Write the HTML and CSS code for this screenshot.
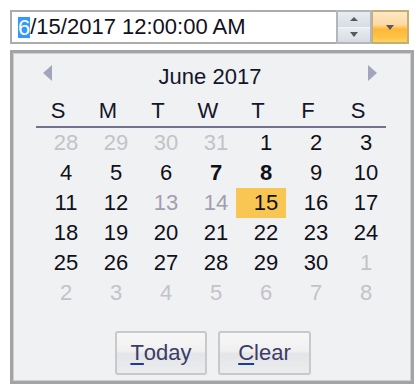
FILE: index.html
```html
<!DOCTYPE html>
<html>
<head>
<meta charset="utf-8">
<link rel="stylesheet" href="styles.css">
</head>
<body>
<div class="wrap">
  <div class="editor">
    <div class="field"><span class="sel">6</span>/15/2017 12:00:00 AM</div>
    <div class="spin">
      <div class="spin-btn"><span class="tri-up"></span></div>
      <div class="spin-btn"><span class="tri-down"></span></div>
    </div>
    <div class="drop"><span class="tri-down"></span></div>
  </div>
  <div class="popup">
    <div class="nav">
      <span class="arrow-left"></span>
      <span class="title">June 2017</span>
      <span class="arrow-right"></span>
    </div>
    <div class="dow">
      <span>S</span><span>M</span><span>T</span><span>W</span><span>T</span><span>F</span><span>S</span>
    </div>
    <div class="days">
      <span class="other">28</span><span class="other">29</span><span class="other">30</span><span class="other">31</span><span>1</span><span>2</span><span>3</span>
      <span>4</span><span>5</span><span>6</span><span class="bold">7</span><span class="bold">8</span><span>9</span><span>10</span>
      <span>11</span><span>12</span><span class="dis">13</span><span class="dis">14</span><span class="today">15</span><span>16</span><span>17</span>
      <span>18</span><span>19</span><span>20</span><span>21</span><span>22</span><span>23</span><span>24</span>
      <span>25</span><span>26</span><span>27</span><span>28</span><span>29</span><span>30</span><span class="other">1</span>
      <span class="other">2</span><span class="other">3</span><span class="other">4</span><span class="other">5</span><span class="other">6</span><span class="other">7</span><span class="other">8</span>
    </div>
    <div class="buttons">
      <div class="btn btn-today"><span class="u">T</span>oday</div>
      <div class="btn btn-clear"><span class="u">C</span>lear</div>
    </div>
  </div>
</div>
</body>
</html>
```

FILE: styles.css
```css
html, body {
  margin: 0;
  padding: 0;
  background: #ffffff;
}

body {
  font-family: "Liberation Sans", Arial, sans-serif;
  font-size: 22px;
  color: #111118;
}

.wrap {
  padding: 10px;
}

.editor {
  display: flex;
  width: 399px;
  height: 34px;
}

.field {
  box-sizing: border-box;
  width: 326px;
  height: 34px;
  border: 2px solid #acacac;
  border-right: none;
  padding-left: 6px;
  display: flex;
  align-items: center;
  white-space: pre;
  color: #101020;
  background: #ffffff;
}

.sel {
  display: inline-block;
  background: #3399ff;
  color: #ffffff;
  line-height: 21px;
}

.spin {
  box-sizing: border-box;
  width: 36px;
  height: 34px;
  border: 2px solid #b4b6ba;
  display: flex;
  flex-direction: column;
}

.spin-btn {
  flex: 1;
  display: flex;
  align-items: center;
  justify-content: center;
  background: linear-gradient(#e9ecf1, #d7dce4);
}

.spin-btn + .spin-btn {
  border-top: 1px solid #f4f5f7;
}

.tri-up {
  width: 0;
  height: 0;
  border-left: 4px solid transparent;
  border-right: 4px solid transparent;
  border-bottom: 4px solid #555a60;
}

.tri-down {
  width: 0;
  height: 0;
  border-left: 4px solid transparent;
  border-right: 4px solid transparent;
  border-top: 5px solid #555a60;
}

.drop {
  box-sizing: border-box;
  width: 37px;
  height: 34px;
  border: 2px solid #c4ae74;
  border-left-width: 1px;
  display: flex;
  align-items: center;
  justify-content: center;
  background: linear-gradient(#fde8c4 0%, #fcd9a2 42%, #ffb735 58%, #ffc448 85%, #ffd266 100%);
}

.popup {
  box-sizing: border-box;
  width: 404px;
  margin-top: 6px;
  border: 3px solid #a4a4a4;
  box-shadow: inset 0 0 0 1px #cfcfd2;
  background: #f0f1f3;
  padding: 5px 0 6px 0;
}

.nav {
  display: flex;
  align-items: flex-start;
  height: 38px;
  padding: 0 34px 0 30px;
}

.arrow-left {
  width: 0;
  height: 0;
  margin-top: 7px;
  border-top: 8px solid transparent;
  border-bottom: 8px solid transparent;
  border-right: 9px solid #a3a5bb;
}

.arrow-right {
  width: 0;
  height: 0;
  margin-top: 7px;
  border-top: 8px solid transparent;
  border-bottom: 8px solid transparent;
  border-left: 9px solid #a3a5bb;
}

.title {
  flex: 1;
  text-align: center;
  line-height: 38px;
  color: #15152a;
}

.dow {
  display: grid;
  grid-template-columns: repeat(7, 50px);
  width: 350px;
  margin-left: 23px;
  height: 30px;
  border-bottom: 2px solid #727290;
}

.dow span {
  text-align: center;
  line-height: 30px;
  padding-right: 6px;
  color: #15152a;
}

.days {
  display: grid;
  grid-template-columns: repeat(7, 50px);
  grid-auto-rows: 30px;
  width: 350px;
  margin-left: 23px;
}

.days span {
  text-align: center;
  line-height: 30px;
  padding-left: 10px;
  color: #101018;
}

.days .other {
  color: #c3c3c7;
}

.days .dis {
  color: #a39db0;
}

.days .bold {
  font-weight: bold;
}

.days .today {
  background: #f9c653;
}

.buttons {
  display: flex;
  justify-content: center;
  gap: 11px;
  margin-top: 23px;
  padding-left: 2px;
}

.btn {
  box-sizing: border-box;
  height: 44px;
  border: 2px solid #c9c9cb;
  border-radius: 3px;
  display: flex;
  align-items: center;
  justify-content: center;
  color: #3c3c66;
  background: linear-gradient(#f7f7f7 0%, #f0f0f1 45%, #e4e5e8 52%, #ebecee 100%);
}

.btn-today {
  width: 92px;
}

.btn-clear {
  width: 93px;
}

.u {
  text-decoration: underline;
  text-decoration-color: #1d3b96;
  text-decoration-thickness: 2px;
  text-underline-offset: 3px;
}
```
